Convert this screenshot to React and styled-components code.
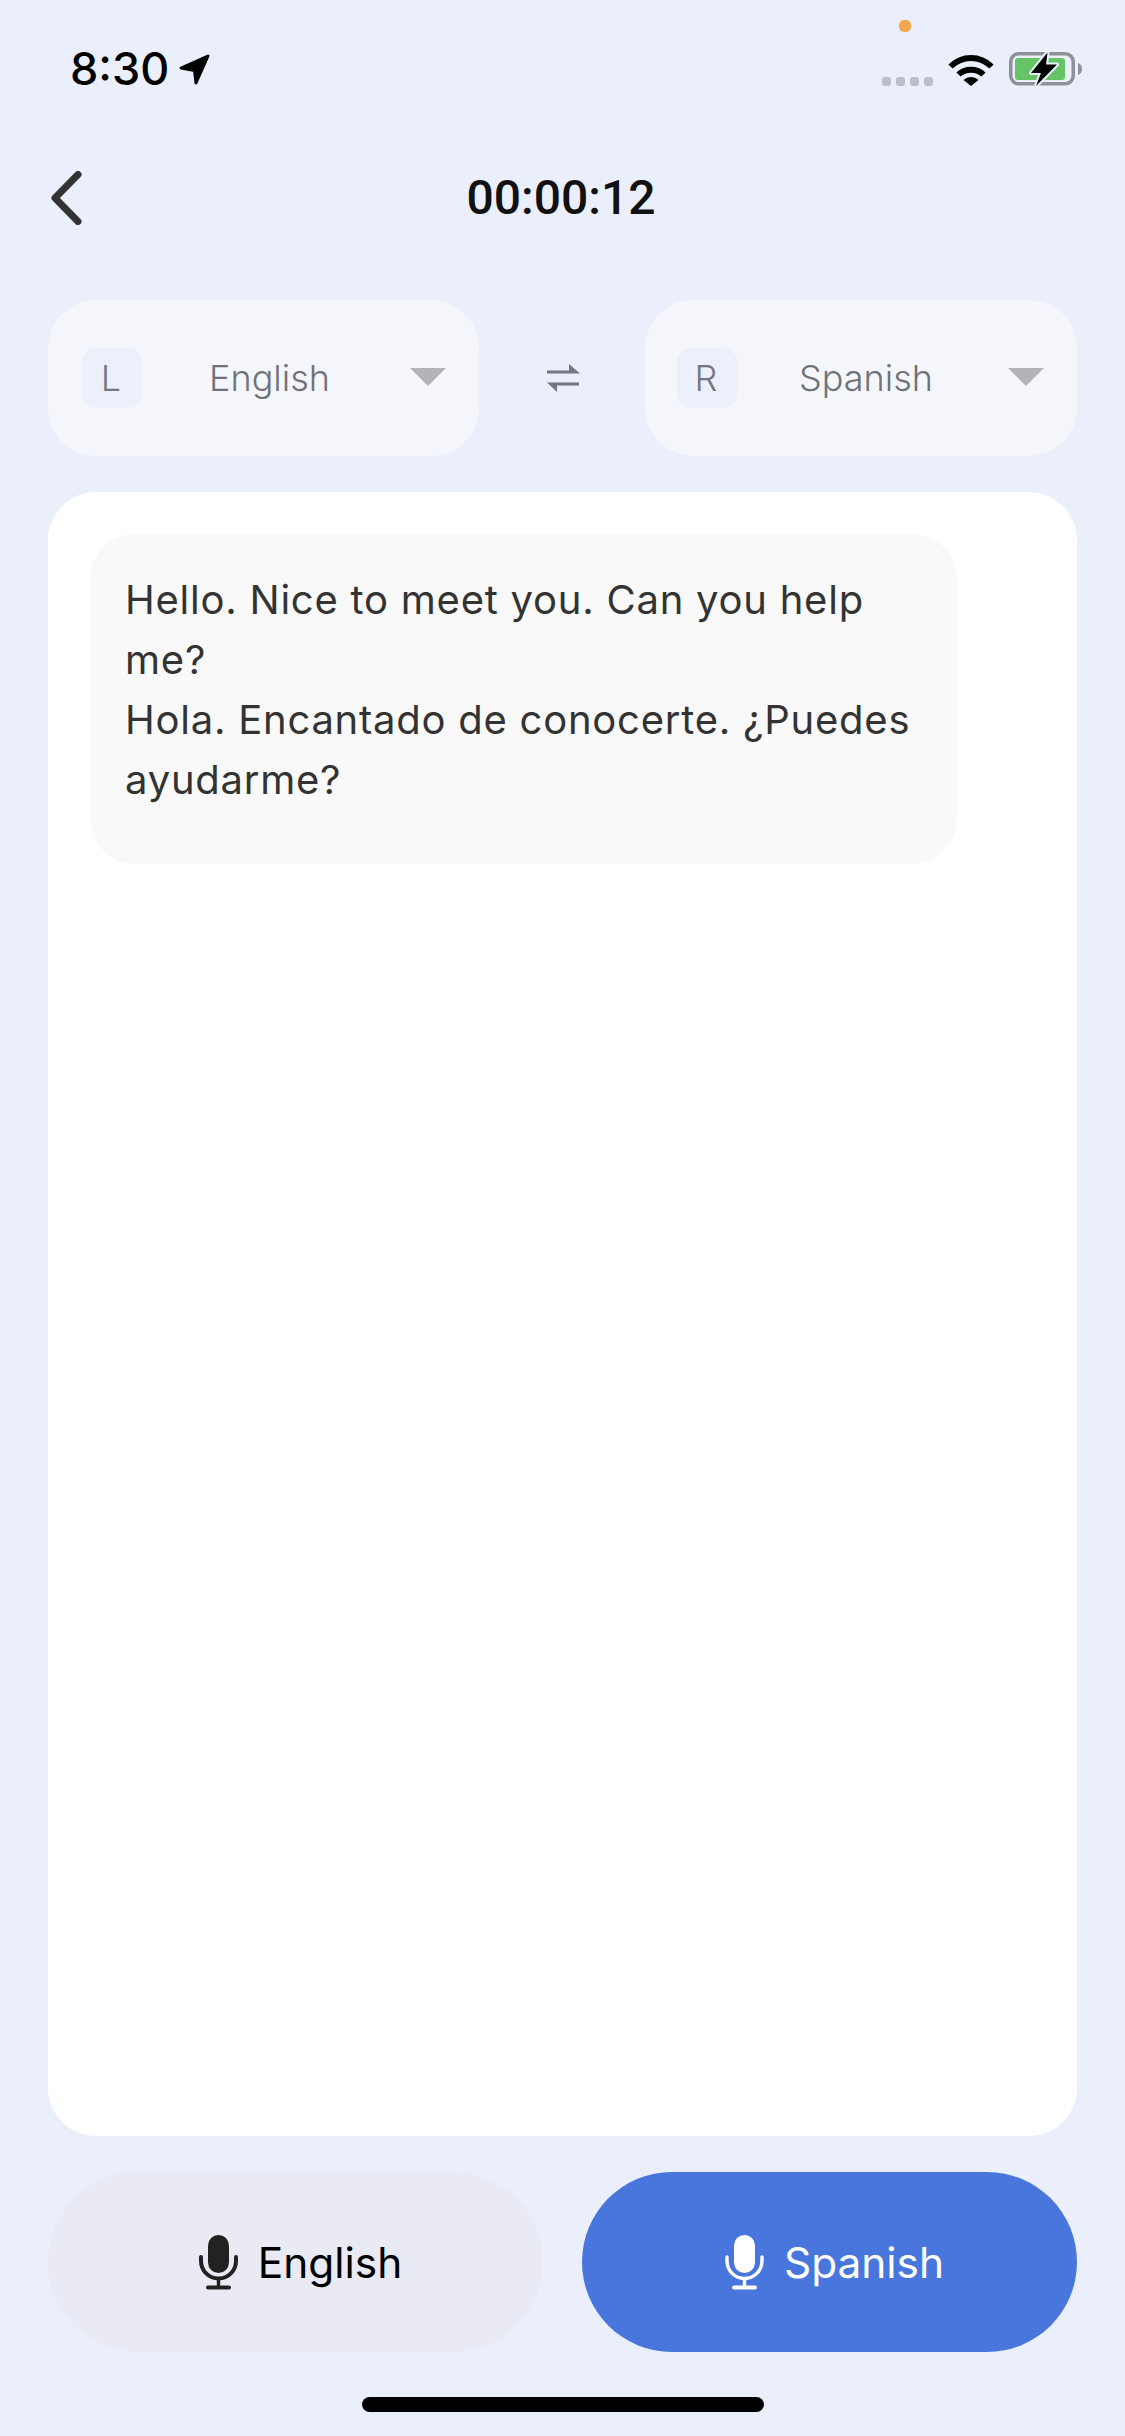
import React from "react";
import styled, { createGlobalStyle } from "styled-components";

const GlobalStyle = createGlobalStyle`
  html, body {
    margin: 0;
    padding: 0;
    background: #eaeffb;
  }
  * {
    box-sizing: border-box;
  }
`;

const Screen = styled.div`
  position: relative;
  display: flex;
  flex-direction: column;
  width: 1125px;
  height: 2436px;
  padding: 0 48px;
  background: #eaeffb;
  font-family: Inter, "Liberation Sans", sans-serif;
  overflow: hidden;
`;

const StatusBar = styled.div`
  display: flex;
  justify-content: space-between;
  align-items: flex-start;
  height: 171px;
  margin: 0 -5px 0 22px;
  padding-top: 47px;
`;

const TimeGroup = styled.div`
  display: flex;
  align-items: center;
  gap: 10px;
`;

const Time = styled.span`
  font-size: 45px;
  line-height: 44px;
  font-weight: 500;
  color: #000;
`;

const StatusIcons = styled.div`
  display: flex;
  align-items: flex-end;
  gap: 15px;
  padding-top: 5px;
`;

const SignalDots = styled.div`
  display: flex;
  gap: 5px;
`;

const SignalDot = styled.span`
  width: 9px;
  height: 9px;
  border-radius: 3px;
  background: #bcbfcb;
`;

const RecordingDot = styled.span`
  position: absolute;
  top: 20px;
  left: 899px;
  width: 12px;
  height: 12px;
  border-radius: 5px;
  background: #f2a94e;
`;

const Header = styled.div`
  display: grid;
  grid-template-columns: 1fr auto 1fr;
  align-items: center;
  height: 52px;
`;

const BackIcon = styled.svg`
  display: block;
  margin-left: 3px;
`;

const Timer = styled.div`
  padding-right: 3px;
  font-family: Roboto, Inter, sans-serif;
  font-size: 48px;
  line-height: 52px;
  font-weight: 500;
  color: #111;
`;

const LanguageRow = styled.div`
  display: grid;
  grid-template-columns: 431px 1fr 432px;
  align-items: center;
  margin-top: 77px;
`;

const LanguageCard = styled.div`
  display: flex;
  align-items: center;
  height: 156px;
  padding: 0 33px 0 ${(props) => props.$inset}px;
  border-radius: 48px;
  background: #f4f6fc;
`;

const SideBadge = styled.span`
  display: flex;
  align-items: center;
  justify-content: center;
  width: 60px;
  height: 60px;
  padding-right: 2px;
  border-radius: 14px;
  background: #ebf0fa;
  font-size: 36px;
  font-weight: 300;
  color: #74777f;
`;

const LanguageName = styled.span`
  flex: 1;
  padding-right: 13px;
  text-align: center;
  font-size: 36px;
  font-weight: 300;
  color: #6f7279;
`;

const Caret = styled.span`
  width: 0;
  height: 0;
  border-left: 18px solid transparent;
  border-right: 18px solid transparent;
  border-top: 18px solid #b2b4ba;
  margin-top: -2px;
`;

const SwapButton = styled.div`
  display: flex;
  justify-content: center;
  padding-left: 2px;
`;

const Panel = styled.div`
  flex: 1;
  margin-top: 36px;
  padding: 42px;
  border-radius: 48px;
  background: #fff;
`;

const Bubble = styled.div`
  width: 867px;
  padding: 36px 30px 54px 35px;
  border-radius: 45px;
  background: #f9f9f9;
  font-size: 40px;
  line-height: 60px;
  letter-spacing: 0.76px;
  color: #333;
`;

const TalkRow = styled.div`
  display: grid;
  grid-template-columns: 495px 495px;
  justify-content: space-between;
  margin-top: 36px;
`;

const TalkButton = styled.div`
  display: flex;
  align-items: center;
  justify-content: center;
  gap: 20px;
  height: 180px;
  padding-left: 10px;
  border-radius: 90px;
  background: ${(props) => (props.$active ? "#4876dc" : "#e9eaf4")};
  color: ${(props) => (props.$active ? "#fff" : "#000")};
  font-size: 42.4px;
`;

const HomeRow = styled.div`
  display: flex;
  justify-content: center;
  height: 84px;
  padding-top: 45px;
`;

const HomeBar = styled.span`
  width: 402px;
  height: 15px;
  border-radius: 8px;
  background: #000;
`;

const MicIcon = ({ color, filled }) => (
  <svg width="39" height="56" viewBox="0 0 39 56" fill="none">
    <rect x="9" y="1" width="21" height="38" rx="10.5" fill={color} />
    <path
      d="M2 23V27A17.5 17.5 0 0 0 37 27V23"
      stroke={color}
      strokeWidth={filled ? 4 : 3.4}
      strokeLinecap="round"
    />
    <path d="M19.5 45V53" stroke={color} strokeWidth="3.4" />
    <path d="M9 53.5H30" stroke={color} strokeWidth="4" strokeLinecap="round" />
  </svg>
);

const LocationIcon = () => (
  <svg width="31" height="31" viewBox="0 0 31 31">
    <path
      d="M29 2L2 14L15.5 16.5L17 29Z"
      fill="#000"
      stroke="#000"
      strokeWidth="3"
      strokeLinejoin="round"
    />
  </svg>
);

const WifiIcon = () => (
  <svg width="46" height="33" viewBox="0 0 46 33" fill="none">
    <path d="M2.5 13.5C14 2 32 2 43.5 13.5" stroke="#000" strokeWidth="6" />
    <path d="M10.5 21.5C17 15 29 15 35.5 21.5" stroke="#000" strokeWidth="6" />
    <path d="M15.5 27C20 23 26 23 30.5 27L23 33Z" fill="#000" />
  </svg>
);

const BatteryIcon = () => (
  <svg width="73" height="34" viewBox="0 0 73 34" fill="none">
    <rect x="1.75" y="1.75" width="62.5" height="30" rx="8" stroke="#8e9198" strokeWidth="3.5" />
    <rect x="6" y="6" width="50" height="22" rx="3" fill="#66c466" />
    <path d="M69 11C72 12 73 14.5 73 17C73 19.5 72 22 69 23Z" fill="#8e9198" />
    <path
      d="M38.5 0.5L22 21H32L27 34L48 12.5H37Z"
      fill="#000"
      stroke="#eaeffb"
      strokeWidth="4"
      strokeLinejoin="round"
      paintOrder="stroke"
    />
  </svg>
);

const BackChevron = () => (
  <BackIcon width="32" height="54" viewBox="0 0 32 54" fill="none">
    <path
      d="M27 3.5L4 27L27 50.5"
      stroke="#333"
      strokeWidth="7"
      strokeLinecap="round"
      strokeLinejoin="round"
    />
  </BackIcon>
);

const SwapIcon = () => (
  <svg width="34" height="28" viewBox="0 0 34 28" fill="#74777f">
    <path d="M1 6.5H23V0L34 9.5H1Z" />
    <path d="M33 18.5H1L11 28V21.5H33Z" />
  </svg>
);

const App = () => {
  return (
    <Screen>
      <GlobalStyle />
      <RecordingDot />

      <StatusBar>
        <TimeGroup>
          <Time>8:30</Time>
          <LocationIcon />
        </TimeGroup>
        <StatusIcons>
          <SignalDots>
            {[0, 1, 2, 3].map((dot) => (
              <SignalDot key={dot} />
            ))}
          </SignalDots>
          <WifiIcon />
          <BatteryIcon />
        </StatusIcons>
      </StatusBar>

      <Header>
        <BackChevron />
        <Timer>00:00:12</Timer>
      </Header>

      <LanguageRow>
        <LanguageCard $inset={34}>
          <SideBadge>L</SideBadge>
          <LanguageName>English</LanguageName>
          <Caret />
        </LanguageCard>
        <SwapButton>
          <SwapIcon />
        </SwapButton>
        <LanguageCard $inset={32}>
          <SideBadge>R</SideBadge>
          <LanguageName>Spanish</LanguageName>
          <Caret />
        </LanguageCard>
      </LanguageRow>

      <Panel>
        <Bubble>
          <div>Hello. Nice to meet you. Can you help me?</div>
          <div>Hola. Encantado de conocerte. ¿Puedes ayudarme?</div>
        </Bubble>
      </Panel>

      <TalkRow>
        <TalkButton>
          <MicIcon color="#222" filled />
          English
        </TalkButton>
        <TalkButton $active>
          <MicIcon color="#fff" />
          Spanish
        </TalkButton>
      </TalkRow>

      <HomeRow>
        <HomeBar />
      </HomeRow>
    </Screen>
  );
};

export default App;
